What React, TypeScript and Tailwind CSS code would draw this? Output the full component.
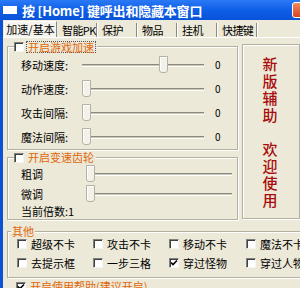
import React from 'react';

const font = "font-['Noto_Sans_CJK_SC','Noto_Sans',sans-serif]";

function Check({ checked = false }: { checked?: boolean }) {
  return (
    <span className="relative w-[10px] h-[10px] shrink-0 bg-white border-t border-l border-[#808080] border-r border-b border-r-[#f4f4f0] border-b-[#f4f4f0] shadow-[inset_1px_1px_0_#404040]">
      {checked && (
        <svg viewBox="0 0 8 8" className="absolute left-[0px] top-[0px] w-[8px] h-[8px]">
          <path d="M1 3.5 L3 5.5 L7 1.5" stroke="#000" strokeWidth="1.6" fill="none" />
        </svg>
      )}
    </span>
  );
}

function Slider({ width, thumb }: { width: number; thumb: number }) {
  return (
    <div className="relative h-[18px]" style={{ width }}>
      <div className="absolute left-0 right-0 top-[8px] h-[3px] bg-[#c9c6b6] border-t border-[#8c8a80] border-b border-b-white" />
      <div
        className="absolute top-0 w-[9px] h-[17px] bg-[#f2f1ea] border border-[#b5b2a4] rounded-b-[3px] shadow-[inset_1px_1px_0_#fff]"
        style={{ left: thumb }}
      />
    </div>
  );
}

function Group({ className, children }: { className?: string; children: React.ReactNode }) {
  return (
    <div className={`relative border border-[#b3b09f] shadow-[inset_1px_1px_0_#fff,1px_1px_0_#fff] ${className ?? ''}`}>
      {children}
    </div>
  );
}

function SpeedRow({ label, thumb }: { label: string; thumb: number }) {
  return (
    <div className="flex items-center h-[24px]">
      <span className="w-[61px] text-[11px] leading-none">{label}</span>
      <Slider width={122} thumb={thumb} />
      <span className="ml-[11px] text-[10px] leading-none">0</span>
    </div>
  );
}

const opts = [
  ['超级不卡', false],
  ['攻击不卡', false],
  ['移动不卡', false],
  ['魔法不卡', false],
  ['去提示框', false],
  ['一步三格', false],
  ['穿过怪物', true],
  ['穿过人物', false],
] as const;

const tabs = ['智能PK', '保护', '物品', '挂机', '快捷键'];

export default function App() {
  return (
    <div className={`w-[300px] h-[288px] overflow-hidden flex flex-col bg-[#0b52d6] ${font} text-black`}>
      {/* title bar */}
      <div className="h-[20px] shrink-0 flex items-center bg-gradient-to-b from-[#2a79f6] via-[#0f5ee8] to-[#0853d8] relative">
        <span className="ml-[3px] w-[14px] h-[8px] bg-white" />
        <span className="ml-[5px] text-white text-[13px] font-bold leading-none whitespace-nowrap tracking-[-0.2px]">
          按 [Home] 键呼出和隐藏本窗口
        </span>
        <span className="absolute right-[-10px] top-[2px] w-[18px] h-[16px] rounded-[3px] border border-white bg-gradient-to-b from-[#f08a5c] to-[#d8401c]" />
      </div>

      {/* body */}
      <div className="flex-1 ml-[3px] bg-[#ece9d8] flex flex-col">
        {/* tabs */}
        <div className="h-[17px] flex items-end text-[11px] leading-none whitespace-nowrap">
          <div className="ml-[1px] w-[53px] h-[16px] bg-[#f4f3ee] border-t border-l border-white border-r border-r-[#8c8a80] flex items-center justify-center">
            加速/基本
          </div>
          {tabs.map((t) => (
            <div key={t} className="w-[40px] h-[14px] flex items-center pl-[5px] border-r border-[#8c8a80] shadow-[1px_0_0_#fff] tracking-[-0.6px]">
              {t}
            </div>
          ))}
        </div>

        {/* page */}
        <div className="flex-1 border-t border-white flex flex-col pl-[4px]">
          <div className="flex gap-[4px]">
            {/* left column */}
            <div className="w-[240px] flex flex-col pt-[8px]">
              <Group className="h-[104px] pt-[6px] pl-[13px]">
                <div className="absolute left-[6px] top-[-6px] flex items-center bg-[#ece9d8] pr-[1px]">
                  <Check />
                  <span className="ml-[2px] px-[1px] border border-dotted border-[#555] text-[11px] leading-[10px] text-[#e0680c]">开启游戏加速</span>
                </div>
                <SpeedRow label="移动速度:" thumb={77} />
                <SpeedRow label="动作速度:" thumb={0} />
                <SpeedRow label="攻击间隔:" thumb={0} />
                <SpeedRow label="魔法间隔:" thumb={0} />
              </Group>

              <Group className="mt-[7px] h-[63px] pt-[6px] pl-[13px]">
                <div className="absolute left-[6px] top-[-6px] flex items-center bg-[#ece9d8] pr-[2px]">
                  <Check />
                  <span className="ml-[4px] text-[11px] leading-none text-[#e0680c]">开启变速齿轮</span>
                </div>
                <div className="flex items-center h-[20px]">
                  <span className="w-[65px] text-[11px] leading-none">粗调</span>
                  <Slider width={146} thumb={0} />
                </div>
                <div className="flex items-center h-[20px]">
                  <span className="w-[65px] text-[11px] leading-none">微调</span>
                  <Slider width={146} thumb={0} />
                </div>
                <div className="flex items-center h-[15px] text-[11px] leading-none">当前倍数:1</div>
              </Group>
            </div>

            {/* right panel */}
            <Group className="mt-[6px] w-[60px] h-[175px] pt-[12px] pl-[19px]">
              <div className="flex flex-col items-start gap-[17px] text-[15px] leading-[16px] text-[#a80c0c] font-medium">
                <span className="[writing-mode:vertical-rl] tracking-[2px]">新版辅助</span>
                <span className="[writing-mode:vertical-rl] tracking-[2px]">欢迎使用</span>
              </div>
            </Group>
          </div>

          {/* others */}
          <Group className="mt-[11px] mr-[-10px] h-[47px] pt-[7px] pl-[9px]">
            <span className="absolute left-[3px] top-[-7px] bg-[#ece9d8] px-[1px] text-[11px] leading-[13px] text-[#e0680c]">其他</span>
            <div className="grid grid-cols-[76px_76px_77px_76px] gap-y-[9px]">
              {opts.map(([name, on]) => (
                <div key={name} className="flex items-center h-[10px]">
                  <Check checked={on} />
                  <span className="ml-[4px] text-[11px] leading-none whitespace-nowrap">{name}</span>
                </div>
              ))}
            </div>
          </Group>

          <div className="mt-[3px] ml-[9px] flex items-center">
            <Check checked />
            <span className="ml-[4px] text-[11px] leading-none text-[#e0680c]">开启使用帮助(建议开启)</span>
          </div>
        </div>
      </div>
    </div>
  );
}
